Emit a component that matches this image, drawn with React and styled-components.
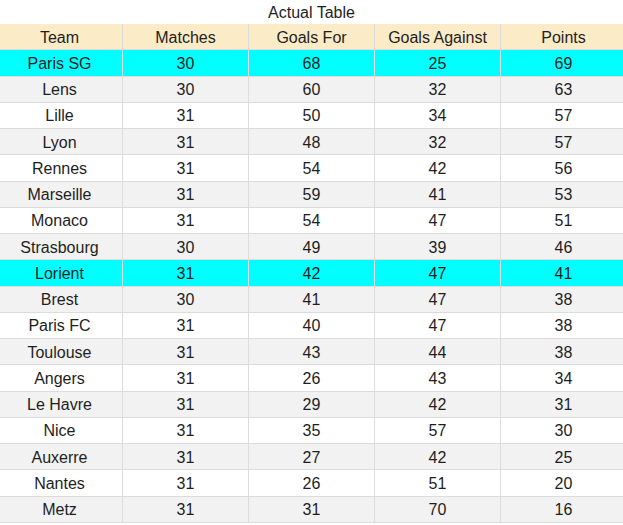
import React from 'react';
import styled, { createGlobalStyle } from 'styled-components';

const GlobalStyle = createGlobalStyle`
    body {
        margin: 0;
        background: #fff;
        font-family: "Liberation Sans", Arial, sans-serif;
        color: #1e1e1e;
        overflow: hidden;
    }
`

const Page = styled.div`
    width: 623px;
    overflow: hidden;
`

const Title = styled.div`
    height: 24px;
    line-height: 25px;
    text-align: center;
    font-size: 16px;
`

const Table = styled.div`
    display: grid;
    grid-template-columns: repeat(5, 126px);
    grid-auto-rows: 26.25px;
    margin-left: -3px;
    width: 630px;
`

const Cell = styled.div`
    display: flex;
    align-items: center;
    justify-content: center;
    padding-top: 2px;
    font-size: 16px;
    background: ${({ $bg }) => $bg};
    border-right: 1px solid #dcdcdc;
    border-bottom: 1px solid #dcdcdc;
    box-sizing: border-box;
    white-space: nowrap;
`

const rows = [
    ['Paris SG', 30, 68, 25, 69],
    ['Lens', 30, 60, 32, 63],
    ['Lille', 31, 50, 34, 57],
    ['Lyon', 31, 48, 32, 57],
    ['Rennes', 31, 54, 42, 56],
    ['Marseille', 31, 59, 41, 53],
    ['Monaco', 31, 54, 47, 51],
    ['Strasbourg', 30, 49, 39, 46],
    ['Lorient', 31, 42, 47, 41],
    ['Brest', 30, 41, 47, 38],
    ['Paris FC', 31, 40, 47, 38],
    ['Toulouse', 31, 43, 44, 38],
    ['Angers', 31, 26, 43, 34],
    ['Le Havre', 31, 29, 42, 31],
    ['Nice', 31, 35, 57, 30],
    ['Auxerre', 31, 27, 42, 25],
    ['Nantes', 31, 26, 51, 20],
    ['Metz', 31, 31, 70, 16],
];

const highlighted = ['Paris SG', 'Lorient'];
const headers = ['Team', 'Matches', 'Goals For', 'Goals Against', 'Points'];

// highlighted teams in cyan, the rest striped
const rowColor = (team, i) => {
    if (highlighted.includes(team)) return '#00ffff';
    return i % 2 === 1 ? '#f2f2f2' : '#ffffff';
}

const App = () => {
    return (
        <Page>
            <GlobalStyle />
            <Title>Actual Table</Title>
            <Table>
                {headers.map((h) => (
                    <Cell key={h} $bg="#fcebc7">{h}</Cell>
                ))}
                {rows.map((row, i) =>
                    row.map((value, j) => (
                        <Cell key={row[0] + j} $bg={rowColor(row[0], i)}>{value}</Cell>
                    ))
                )}
            </Table>
        </Page>
    );
}

export default App
